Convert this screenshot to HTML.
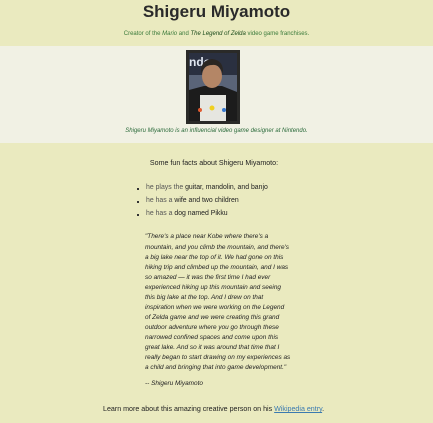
<!DOCTYPE html>
<html><head><style>
body{margin:0;width:433px;height:423px;background:#eaeabf;font-family:"Liberation Sans",Arial,sans-serif;position:relative;overflow:hidden;color:#222}
.a{position:absolute;white-space:nowrap}
.c{left:0;width:433px;text-align:center}
.q{left:145px;font-size:6.45px;font-style:italic;color:#222}
.band{position:absolute;left:0;top:46px;width:433px;height:97px;background:#f1f1e4}
.li{left:146px;font-size:6.9px;color:#555}
.dot{position:absolute;left:137px;width:2px;height:2px;background:#333}
</style></head><body>
<div class="a c" style="top:2px;font-size:17px;font-weight:bold;color:#2a2a2a">Shigeru Miyamoto</div>
<div class="a c" style="top:31px;font-size:6px;color:#3a7a3a">Creator of the <i>Mario</i> and <i style="color:#1a4a1a">The Legend of Zelda</i> video game franchises.</div>
<div class="band"></div>
<div class="a" style="left:186px;top:50px;width:54px;height:74px;background:#2a2a28">
<svg width="54" height="74" viewBox="0 0 54 74">
<rect x="3" y="3" width="48" height="68" fill="#5a6478"/>
<rect x="3" y="3" width="48" height="22" fill="#2a3040"/>
<text x="3" y="16" font-size="12" font-weight="bold" fill="#dfe6f0" font-family="Liberation Sans">ndo</text>
<path d="M3 40 L18 36 L36 36 L51 42 L51 71 L3 71Z" fill="#1c1c1c"/>
<rect x="14" y="45" width="26" height="26" fill="#e6e6e0"/>
<ellipse cx="26" cy="26" rx="10" ry="12" fill="#b48666"/>
<path d="M15 24 Q14 10 26 9 Q38 10 37 24 Q34 14 26 15 Q18 15 15 24Z" fill="#2a2622"/>
<circle cx="14" cy="60" r="2" fill="#e05a30"/><circle cx="26" cy="58" r="2.5" fill="#f0d020"/><circle cx="38" cy="60" r="2" fill="#3a7ad0"/>
</svg></div>
<div class="a c" style="top:128px;font-size:6px;font-style:italic;color:#2a6a3a">Shigeru Miyamoto is an influencial video game designer at Nintendo.</div>
<div class="a" style="left:0;width:428px;text-align:center;top:159px;font-size:7.1px;color:#222">Some fun facts about Shigeru Miyamoto:</div>
<div class="dot" style="top:188px"></div><div class="a li" style="top:184px">he plays the <span style="color:#222">guitar, mandolin, and banjo</span></div>
<div class="dot" style="top:201px"></div><div class="a li" style="top:197px">he has a <span style="color:#222">wife and two children</span></div>
<div class="dot" style="top:214px"></div><div class="a li" style="top:210px">he has a <span style="color:#222">dog named Pikku</span></div>
<div class="a q" style="top:233px">"There's a place near Kobe where there's a</div>
<div class="a q" style="top:244px">mountain, and you climb the mountain, and there's</div>
<div class="a q" style="top:254px">a big lake near the top of it. We had gone on this</div>
<div class="a q" style="top:264px">hiking trip and climbed up the mountain, and I was</div>
<div class="a q" style="top:274px">so amazed — it was the first time I had ever</div>
<div class="a q" style="top:284px">experienced hiking up this mountain and seeing</div>
<div class="a q" style="top:294px">this big lake at the top. And I drew on that</div>
<div class="a q" style="top:304px">inspiration when we were working on the Legend</div>
<div class="a q" style="top:314px">of Zelda game and we were creating this grand</div>
<div class="a q" style="top:324px">outdoor adventure where you go through these</div>
<div class="a q" style="top:334px">narrowed confined spaces and come upon this</div>
<div class="a q" style="top:344px">great lake. And so it was around that time that I</div>
<div class="a q" style="top:354px">really began to start drawing on my experiences as</div>
<div class="a q" style="top:364px">a child and bringing that into game development."</div>
<div class="a q" style="top:380px">-- Shigeru Miyamoto</div>
<div class="a" style="left:103px;top:405px;font-size:7.1px;color:#222">Learn more about this amazing creative person on his <span style="color:#3a7ab0;text-decoration:underline">Wikipedia entry</span>.</div>
</body></html>
